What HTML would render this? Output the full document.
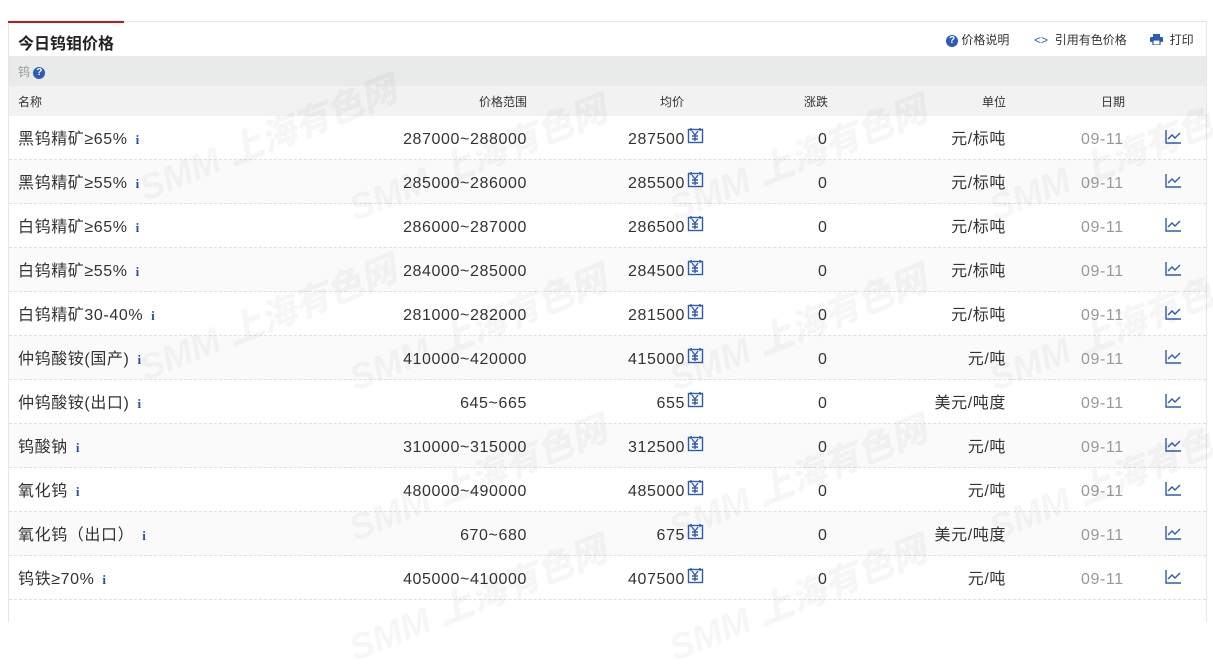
<!DOCTYPE html><html><head><meta charset="utf-8"><style>
body{margin:0;background:#fff;font-family:"Liberation Sans","Noto Sans CJK SC",sans-serif;width:1213px;height:606px;overflow:hidden;position:relative}
.box{position:absolute;left:8px;top:21px;width:1197px;height:600px;border:1px solid #e6e6e6;border-bottom:none}
.red{position:absolute;left:8px;top:21px;width:116px;height:2px;background:#d0101a}
.title{position:absolute;left:18px;top:30px;font-size:16px;font-weight:bold;color:#222}
.tools{position:absolute;top:31px;font-size:12px;color:#333}
.gray{position:absolute;left:9px;top:56px;width:1197px;height:30px;background:#e9eaea}
.hdr{position:absolute;left:9px;top:86px;width:1197px;height:30px;background:#f2f2f2;font-size:12px;color:#333}
.row{position:absolute;left:9px;width:1197px;height:43px;border-bottom:1px dashed #e0e0e0;font-size:16px;color:#333}
.c{position:absolute;top:2px;line-height:44px;white-space:nowrap;letter-spacing:.6px}
.hdr .c{line-height:30px;top:1px;letter-spacing:0}
.i{color:#2a4fa8;font-family:"Liberation Serif",serif;font-weight:bold;font-size:13px;margin-left:8px}
.q{display:inline-block;width:12px;height:12px;border-radius:50%;background:#2f5bb5;color:#fff;font-size:10px;line-height:12px;text-align:center;font-weight:bold;vertical-align:1px;letter-spacing:0}
.wm{position:absolute;font-size:36px;font-weight:900;color:#000;opacity:.03;transform:rotate(-22deg);white-space:nowrap;font-style:italic}
</style></head><body>
<div class="box"></div><div class="red"></div>
<div class="title">今日钨钼价格</div>
<div class="tools" style="left:946px"><span class="q">?</span> 价格说明</div>
<div class="tools" style="left:1034px;color:#2f5bb5">&lt;&gt; <span style="color:#333">&nbsp;引用有色价格</span></div>
<div class="tools" style="left:1150px"><svg width="13" height="11" style="vertical-align:-1px"><rect x="3" y="0" width="7" height="3" fill="#2f5bb5"/><rect x="0" y="3" width="13" height="5" rx="1" fill="#2f5bb5"/><rect x="3" y="6" width="7" height="5" fill="#fff" stroke="#2f5bb5" stroke-width="1.2"/></svg> &nbsp;打印</div>
<div class="gray"><span style="position:absolute;left:9px;top:7px;font-size:12px;color:#999">钨 <span class="q">?</span></span></div>
<div class="hdr">
<span class="c" style="left:9px">名称</span>
<span class="c" style="right:679px">价格范围</span>
<span class="c" style="left:651px">均价</span>
<span class="c" style="left:795px">涨跌</span>
<span class="c" style="right:200px">单位</span>
<span class="c" style="left:1092px">日期</span>
</div>
<div>
<div class="row" style="top:116px;background:#fff"><span class="c" style="left:9px">黑钨精矿≥65%<span class="i">i</span></span><span class="c" style="right:679px">287000~288000</span><span class="c" style="right:521px">287500</span><span class="c" style="left:809px">0</span><span class="c" style="right:200px">元/标吨</span><span class="c" style="left:1072px;color:#999">09-11</span></div>
<div class="row" style="top:160px;background:#fafafa"><span class="c" style="left:9px">黑钨精矿≥55%<span class="i">i</span></span><span class="c" style="right:679px">285000~286000</span><span class="c" style="right:521px">285500</span><span class="c" style="left:809px">0</span><span class="c" style="right:200px">元/标吨</span><span class="c" style="left:1072px;color:#999">09-11</span></div>
<div class="row" style="top:204px;background:#fff"><span class="c" style="left:9px">白钨精矿≥65%<span class="i">i</span></span><span class="c" style="right:679px">286000~287000</span><span class="c" style="right:521px">286500</span><span class="c" style="left:809px">0</span><span class="c" style="right:200px">元/标吨</span><span class="c" style="left:1072px;color:#999">09-11</span></div>
<div class="row" style="top:248px;background:#fafafa"><span class="c" style="left:9px">白钨精矿≥55%<span class="i">i</span></span><span class="c" style="right:679px">284000~285000</span><span class="c" style="right:521px">284500</span><span class="c" style="left:809px">0</span><span class="c" style="right:200px">元/标吨</span><span class="c" style="left:1072px;color:#999">09-11</span></div>
<div class="row" style="top:292px;background:#fff"><span class="c" style="left:9px">白钨精矿30-40%<span class="i">i</span></span><span class="c" style="right:679px">281000~282000</span><span class="c" style="right:521px">281500</span><span class="c" style="left:809px">0</span><span class="c" style="right:200px">元/标吨</span><span class="c" style="left:1072px;color:#999">09-11</span></div>
<div class="row" style="top:336px;background:#fafafa"><span class="c" style="left:9px">仲钨酸铵(国产)<span class="i">i</span></span><span class="c" style="right:679px">410000~420000</span><span class="c" style="right:521px">415000</span><span class="c" style="left:809px">0</span><span class="c" style="right:200px">元/吨</span><span class="c" style="left:1072px;color:#999">09-11</span></div>
<div class="row" style="top:380px;background:#fff"><span class="c" style="left:9px">仲钨酸铵(出口)<span class="i">i</span></span><span class="c" style="right:679px">645~665</span><span class="c" style="right:521px">655</span><span class="c" style="left:809px">0</span><span class="c" style="right:200px">美元/吨度</span><span class="c" style="left:1072px;color:#999">09-11</span></div>
<div class="row" style="top:424px;background:#fafafa"><span class="c" style="left:9px">钨酸钠<span class="i">i</span></span><span class="c" style="right:679px">310000~315000</span><span class="c" style="right:521px">312500</span><span class="c" style="left:809px">0</span><span class="c" style="right:200px">元/吨</span><span class="c" style="left:1072px;color:#999">09-11</span></div>
<div class="row" style="top:468px;background:#fff"><span class="c" style="left:9px">氧化钨<span class="i">i</span></span><span class="c" style="right:679px">480000~490000</span><span class="c" style="right:521px">485000</span><span class="c" style="left:809px">0</span><span class="c" style="right:200px">元/吨</span><span class="c" style="left:1072px;color:#999">09-11</span></div>
<div class="row" style="top:512px;background:#fafafa"><span class="c" style="left:9px">氧化钨（出口）<span class="i">i</span></span><span class="c" style="right:679px">670~680</span><span class="c" style="right:521px">675</span><span class="c" style="left:809px">0</span><span class="c" style="right:200px">美元/吨度</span><span class="c" style="left:1072px;color:#999">09-11</span></div>
<div class="row" style="top:556px;background:#fff"><span class="c" style="left:9px">钨铁≥70%<span class="i">i</span></span><span class="c" style="right:679px">405000~410000</span><span class="c" style="right:521px">407500</span><span class="c" style="left:809px">0</span><span class="c" style="right:200px">元/吨</span><span class="c" style="left:1072px;color:#999">09-11</span></div>
</div>
<svg style="position:absolute;left:0;top:0" width="1213" height="606">
<g fill="none" stroke="#2f5bb5" stroke-width="1.4">
<g id="ic"><rect x="688.5" y="129.5" width="14" height="13"/><path d="M692 131l3 4 3-4M695 135v6M692 136h6M692 139h6M691 128v3M700 128v3"/><path d="M1166 130v13h15M1168 139l4-4 3 3 5-5"/></g>
</g>
<g fill="none" stroke="#2f5bb5" stroke-width="1.4">
<use href="#ic" y="44"/><use href="#ic" y="88"/><use href="#ic" y="132"/><use href="#ic" y="176"/><use href="#ic" y="220"/><use href="#ic" y="264"/><use href="#ic" y="308"/><use href="#ic" y="352"/><use href="#ic" y="396"/><use href="#ic" y="440"/>
</g>
</svg>
<div class="wm" style="left:130px;top:110px">SMM 上海有色网</div>
<div class="wm" style="left:340px;top:130px">SMM 上海有色网</div>
<div class="wm" style="left:660px;top:130px">SMM 上海有色网</div>
<div class="wm" style="left:980px;top:130px">SMM 上海有色网</div>
<div class="wm" style="left:130px;top:290px">SMM 上海有色网</div>
<div class="wm" style="left:340px;top:300px">SMM 上海有色网</div>
<div class="wm" style="left:660px;top:300px">SMM 上海有色网</div>
<div class="wm" style="left:980px;top:300px">SMM 上海有色网</div>
<div class="wm" style="left:340px;top:450px">SMM 上海有色网</div>
<div class="wm" style="left:660px;top:450px">SMM 上海有色网</div>
<div class="wm" style="left:980px;top:450px">SMM 上海有色网</div>
<div class="wm" style="left:340px;top:570px">SMM 上海有色网</div>
<div class="wm" style="left:660px;top:570px">SMM 上海有色网</div>
</body></html>
